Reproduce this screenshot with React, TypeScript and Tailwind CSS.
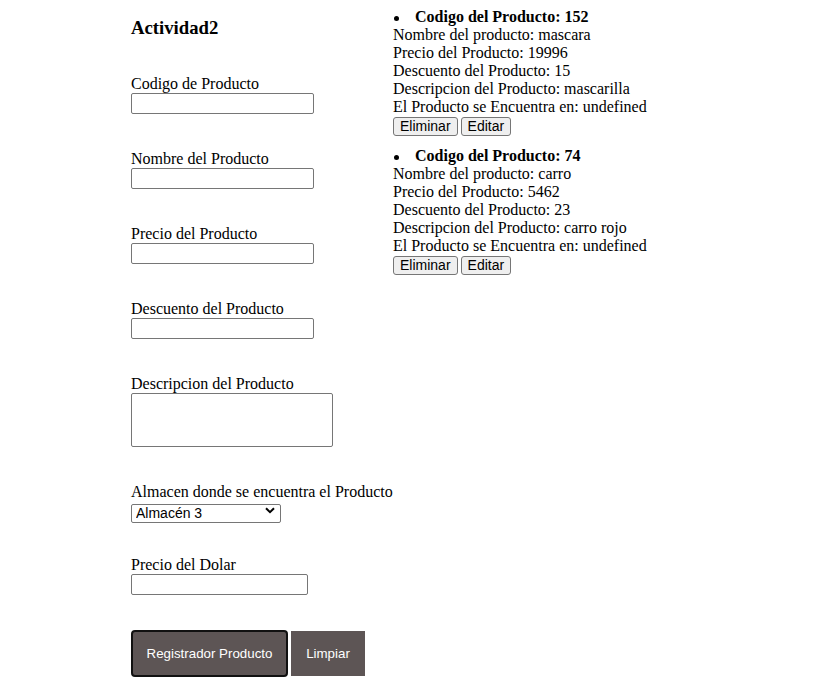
import React from 'react';

interface Producto {
  codigo: number;
  nombre: string;
  precio: number;
  descuento: number;
  descripcion: string;
  almacen?: string;
}

const productos: Producto[] = [
  { codigo: 152, nombre: 'mascara', precio: 19996, descuento: 15, descripcion: 'mascarilla' },
  { codigo: 74, nombre: 'carro', precio: 5462, descuento: 23, descripcion: 'carro rojo' },
];

const inputCls = 'block h-[21px] border border-[#767676] rounded-[2px] bg-white px-[2px] text-[13.33px] outline-none';
const labelCls = 'block h-[18px] leading-[18px]';
const smallBtn =
  "h-[19px] px-[6px] bg-[#efefef] border border-[#767676] rounded-[3px] text-[14px] leading-[17px] text-black font-['Liberation_Sans',Arial,sans-serif]";

function Item({ p }: { p: Producto }) {
  return (
    <li className="mb-[11px] leading-[18px]">
      <div className="flex items-center h-[18px]">
        <span className="w-[5px] h-[5px] rounded-full bg-black ml-[1px] mr-[16px] mt-[2px]" />
        <b>Codigo del Producto: {p.codigo}</b>
      </div>
      <div>Nombre del producto: {p.nombre}</div>
      <div>Precio del Producto: {p.precio}</div>
      <div>Descuento del Producto: {p.descuento}</div>
      <div>Descripcion del Producto: {p.descripcion}</div>
      <div>El Producto se Encuentra en: {String(p.almacen)}</div>
      <div className="flex gap-[3px] mt-[1px]">
        <button className={smallBtn}>Eliminar</button>
        <button className={smallBtn}>Editar</button>
      </div>
    </li>
  );
}

export default function App() {
  return (
    <div className="flex pl-[131px] min-h-[699px] bg-white text-black text-[16px] font-['Liberation_Serif','Times_New_Roman',serif]">
      <form className="w-[262px] shrink-0 flex flex-col" onSubmit={e => e.preventDefault()}>
        <h3 className="mt-[17px] h-[22px] leading-[22px] text-[18.72px] font-bold">Actividad2</h3>

        <label className={`${labelCls} mt-[36px]`}>Codigo de Producto</label>
        <input className={`${inputCls} w-[183px]`} />

        <label className={`${labelCls} mt-[36px]`}>Nombre del Producto</label>
        <input className={`${inputCls} w-[183px]`} />

        <label className={`${labelCls} mt-[36px]`}>Precio del Producto</label>
        <input className={`${inputCls} w-[183px]`} />

        <label className={`${labelCls} mt-[36px]`}>Descuento del Producto</label>
        <input className={`${inputCls} w-[183px]`} />

        <label className={`${labelCls} mt-[36px]`}>Descripcion del Producto</label>
        <textarea className="block w-[202px] h-[54px] border border-[#767676] rounded-[2px] bg-white resize-none outline-none" />

        <label className={`${labelCls} mt-[36px] whitespace-nowrap`}>Almacen donde se encuentra el Producto</label>
        <div className="relative w-[150px] h-[19px]">
          <select
            defaultValue="3"
            className="appearance-none w-full h-full border border-[#767676] rounded-[2px] bg-white pl-[4px] text-[14px] leading-[17px] text-black outline-none font-['Liberation_Sans',Arial,sans-serif]"
          >
            <option value="1">Almacén 1</option>
            <option value="2">Almacén 2</option>
            <option value="3">Almacén 3</option>
          </select>
          <svg className="absolute right-[6px] top-[6px] pointer-events-none" width="10" height="7" viewBox="0 0 10 7">
            <path d="M1 1.2 L5 5.2 L9 1.2" fill="none" stroke="#000" strokeWidth="2" />
          </svg>
        </div>

        <label className={`${labelCls} mt-[36px]`}>Precio del Dolar</label>
        <input className={`${inputCls} w-[177px]`} />

        <div className="flex items-center gap-[3px] mt-[35px] font-['Liberation_Sans',Arial,sans-serif] text-[13.33px] text-white">
          <button type="submit" className="w-[157px] h-[47px] bg-[#5d5555] border-2 border-[#111] rounded-[4px]">
            Registrador Producto
          </button>
          <button type="button" className="w-[74px] h-[45px] bg-[#5d5555]">
            Limpiar
          </button>
        </div>
      </form>

      <ul className="pt-[8px]">
        {productos.map(p => (
          <Item key={p.codigo} p={p} />
        ))}
      </ul>
    </div>
  );
}
